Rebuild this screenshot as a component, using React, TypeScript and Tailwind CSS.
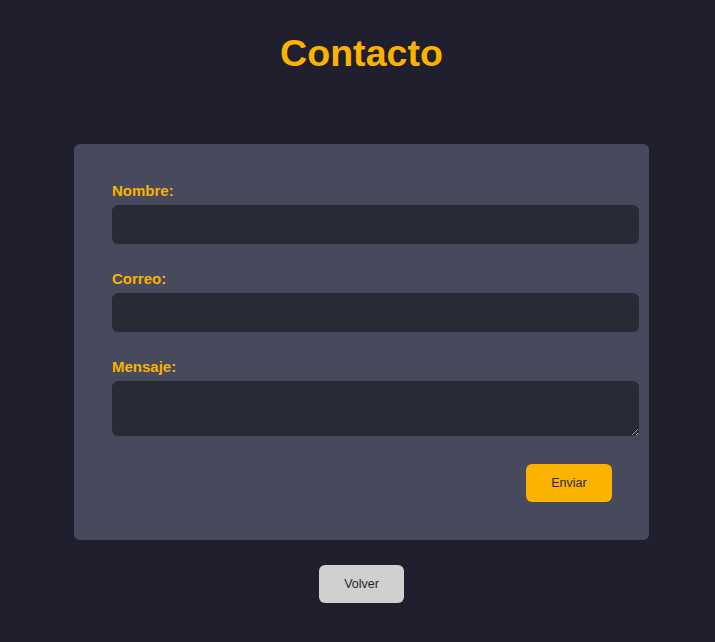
import React from "react";

export default function App() {
  return (
    <div
      className="min-h-[642px] w-full bg-[#1f1f2e] flex flex-col items-center pl-[8px]"
      style={{ fontFamily: '"Liberation Sans", Arial, sans-serif' }}
    >
      <h1 className="mt-[31px] h-[44px] leading-[44px] text-[37.6px] font-bold text-[#fbb300]">
        Contacto
      </h1>
      <form
        className="mt-[69px] w-[575px] rounded-[6px] bg-[#464a5c] pt-[38px] pb-[38px] pl-[38px] pr-[38px] flex flex-col"
        onSubmit={(e) => e.preventDefault()}
      >
        <label className="block h-[17px] leading-[17px] text-[15px] font-bold text-[#fbb300] mb-[6px]">
          Nombre:
        </label>
        <input
          type="text"
          className="block w-[527px] h-[39px] shrink-0 rounded-[6px] bg-[#282a36] text-white px-3 outline-none"
        />
        <label className="block mt-[26px] h-[17px] leading-[17px] text-[15px] font-bold text-[#fbb300] mb-[6px]">
          Correo:
        </label>
        <input
          type="email"
          className="block w-[527px] h-[39px] shrink-0 rounded-[6px] bg-[#282a36] text-white px-3 outline-none"
        />
        <label className="block mt-[26px] h-[17px] leading-[17px] text-[15px] font-bold text-[#fbb300] mb-[6px]">
          Mensaje:
        </label>
        <textarea
          className="block w-[527px] h-[55px] shrink-0 rounded-[6px] bg-[#282a36] text-white px-3 py-2 outline-none"
        />
        <div className="mt-[28px] flex justify-end mr-[-1px]">
          <button
            type="submit"
            className="w-[86px] h-[38px] rounded-[6px] bg-[#fbb300] text-[#2a2a35] text-[12.5px]"
          >
            Enviar
          </button>
        </div>
      </form>
      <button
        type="button"
        className="mt-[25px] w-[85px] h-[38px] rounded-[6px] bg-[#d0d0d0] text-[#1f1f2e] text-[12.5px]"
      >
        Volver
      </button>
    </div>
  );
}
